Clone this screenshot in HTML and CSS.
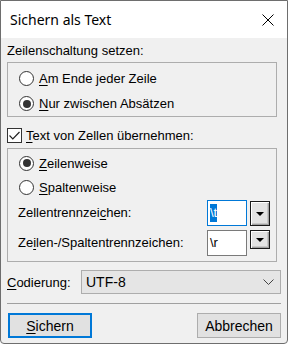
FILE: index.html
```html
<!DOCTYPE html>
<html lang="de">
<head>
    <meta charset="utf-8">
    <title>Sichern als Text</title>
    <link rel="stylesheet" href="styles.css">
</head>
<body>
    <div class="window">
        <div class="titlebar">
            <span class="title">Sichern als Text</span>
            <svg class="close" width="12" height="12" viewBox="0 0 12 12">
                <path d="M0.5 0.5 L11.5 11.5 M11.5 0.5 L0.5 11.5" stroke="#000" stroke-width="1" fill="none"/>
            </svg>
        </div>

        <div class="dialog">
            <div class="label-top">Zeilenschaltung setzen:</div>

            <div class="group group-lines">
                <div class="radio-row">
                    <span class="radio"></span>
                    <span><u>A</u>m Ende jeder Zeile</span>
                </div>
                <div class="radio-row">
                    <span class="radio checked"></span>
                    <span><u>N</u>ur zwischen Absätzen</span>
                </div>
            </div>

            <div class="check-row">
                <span class="checkbox">
                    <svg width="11" height="9" viewBox="0 0 11 9">
                        <path d="M0.5 4.5 L3.8 7.8 L10.5 1" stroke="#222" stroke-width="1.2" fill="none"/>
                    </svg>
                </span>
                <span><u>T</u>ext von Zellen übernehmen:</span>
            </div>

            <div class="group group-cells">
                <div class="radio-row">
                    <span class="radio checked"></span>
                    <span><u>Z</u>eilenweise</span>
                </div>
                <div class="radio-row">
                    <span class="radio"></span>
                    <span><u>S</u>paltenweise</span>
                </div>
                <div class="field-row">
                    <span class="field-label">Zellentrennzei<u>c</u>hen:</span>
                    <span class="combo-input focused"><span class="selected">\t</span></span>
                    <span class="drop-btn"><span class="arrow"></span></span>
                </div>
                <div class="field-row second">
                    <span class="field-label">Ze<u>i</u>len-/Spaltentrennzeichen:</span>
                    <span class="combo-input">\r</span>
                    <span class="drop-btn short"><span class="arrow"></span></span>
                </div>
            </div>

            <div class="encoding-row">
                <span class="encoding-label"><u>C</u>odierung:</span>
                <div class="select">
                    <span>UTF-8</span>
                    <svg width="11" height="6" viewBox="0 0 11 6">
                        <path d="M0.5 0.5 L5.5 5.5 L10.5 0.5" stroke="#444" stroke-width="1" fill="none"/>
                    </svg>
                </div>
            </div>

            <div class="separator"></div>

            <div class="buttons">
                <button class="btn default"><u>S</u>ichern</button>
                <button class="btn">Abbrechen</button>
            </div>
        </div>
    </div>
</body>
</html>
```

FILE: styles.css
```css
body {
    margin: 0;
    background: #ffffff;
    font-family: "Liberation Sans", Arial, sans-serif;
    font-size: 13px;
    color: #000;
}
u {
    text-decoration-thickness: 1px;
    text-underline-offset: 2px;
}
.window {
    width: 286px;
    height: 342px;
    border: 1px solid #6e6e6e;
    border-radius: 0 0 4px 4px;
    background: #f0f0f0;
    display: flex;
    flex-direction: column;
    overflow: hidden;
}
.titlebar {
    height: 37px;
    flex: none;
    background: #ffffff;
    display: flex;
    align-items: center;
    justify-content: space-between;
    padding: 0 13px 0 9px;
}
.title {
    font-family: "Noto Sans", sans-serif;
    font-size: 14px;
    margin-top: -1px;
}
.close {
    margin-top: 1px;
}
.dialog {
    padding: 5px 6px 0 6px;
    display: flex;
    flex-direction: column;
}
.label-top {
    height: 16px;
    line-height: 16px;
}
.group {
    border: 1px solid #adadad;
    margin-right: 4px;
}
.group-lines {
    margin-top: 3px;
    padding-top: 3px;
    height: 50px;
}
.radio-row {
    height: 25px;
    display: flex;
    align-items: center;
    padding-left: 11px;
}
.radio {
    width: 13px;
    height: 13px;
    border: 1px solid #333;
    border-radius: 50%;
    background: #fff;
    margin-right: 5px;
    display: flex;
    align-items: center;
    justify-content: center;
    flex: none;
}
.radio.checked::after {
    content: "";
    width: 8px;
    height: 8px;
    border-radius: 50%;
    background: #333;
}
.check-row {
    margin-top: 5px;
    height: 26px;
    display: flex;
    align-items: center;
}
.checkbox {
    width: 13px;
    height: 13px;
    border: 1px solid #333;
    background: #fff;
    margin-right: 4px;
    display: flex;
    align-items: center;
    justify-content: center;
}
.group-cells {
    padding: 2px 0 5px 0;
}
.group-cells .radio-row {
    height: 24px;
}
.field-row {
    display: flex;
    align-items: flex-start;
    padding-left: 10px;
    margin-top: 1px;
}
.field-row.second {
    margin-top: 4px;
}
.field-label {
    width: 189px;
    line-height: 26px;
}
.combo-input {
    width: 36px;
    height: 24px;
    border: 1px solid #7a7a7a;
    background: #fff;
    line-height: 24px;
    padding-left: 2px;
}
.combo-input.focused {
    border-color: #0078d7;
}
.selected {
    background: #0078d7;
    color: #fff;
    display: inline-block;
    line-height: 18px;
}
.drop-btn {
    width: 18px;
    height: 23px;
    margin-left: 3px;
    margin-top: 1px;
    border: 1px solid #1a1a1a;
    background: #e3e3e3;
    box-shadow: inset 1px 1px 0 #fff, inset -1px -1px 0 #a0a0a0, inset -2px -2px 0 #c8c8c8;
    display: flex;
    align-items: center;
    justify-content: center;
}
.drop-btn.short {
    height: 17px;
    margin-top: 0;
}
.arrow {
    width: 0;
    height: 0;
    border-left: 4px solid transparent;
    border-right: 4px solid transparent;
    border-top: 4px solid #000;
}
.encoding-row {
    margin-top: 8px;
    display: flex;
    align-items: center;
}
.encoding-label {
    width: 74px;
}
.select {
    flex: 1;
    height: 22px;
    border: 1px solid #adadad;
    background: #e5e5e5;
    display: flex;
    align-items: center;
    justify-content: space-between;
    padding: 0 6px 0 4px;
}
.select span {
    font-size: 14px;
}
.separator {
    margin-top: 9px;
    height: 1px;
    background: #a0a0a0;
}
.buttons {
    margin-top: 9px;
    display: flex;
    justify-content: space-between;
    padding: 0 0 0 1px;
}
.btn {
    width: 84px;
    height: 25px;
    background: #e1e1e1;
    border: 1px solid #adadad;
    font-family: "Liberation Sans", Arial, sans-serif;
    font-size: 14px;
    color: #000;
    padding: 0;
}
.btn.default {
    border: 2px solid #0078d7;
}
```
